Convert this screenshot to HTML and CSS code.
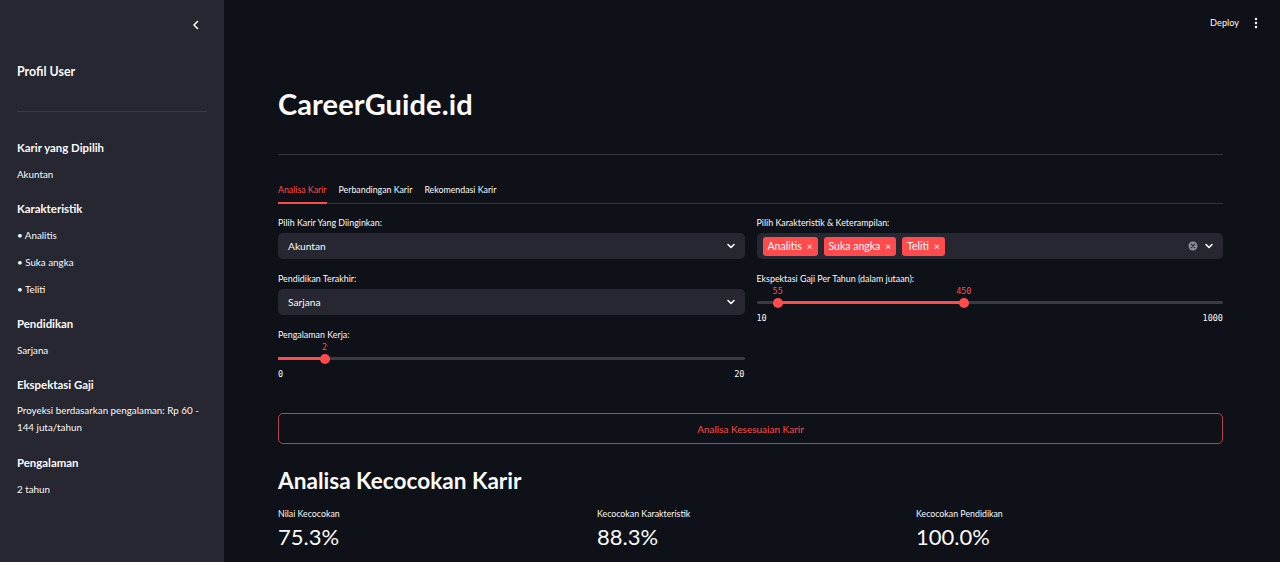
FILE: index.html
```html
<!DOCTYPE html>
<html lang="id">
<head>
<meta charset="utf-8">
<title>CareerGuide.id</title>
<link rel="stylesheet" href="styles.css">
</head>
<body>
<div class="app">
  <aside class="sidebar">
    <div class="collapse-row">
      <svg class="icon-collapse" width="10" height="10" viewBox="0 0 10 10"><path d="M6.5 1.5 L3 5 L6.5 8.5" fill="none" stroke="#fafafa" stroke-width="1.6" stroke-linecap="round" stroke-linejoin="round"/></svg>
    </div>
    <h2 class="side-title">Profil User</h2>
    <hr class="side-hr">
    <div class="side-section">
      <h3 class="side-head">Karir yang Dipilih</h3>
      <p class="side-text">Akuntan</p>
    </div>
    <div class="side-section">
      <h3 class="side-head">Karakteristik</h3>
      <p class="side-text bullet">• Analitis</p>
      <p class="side-text bullet">• Suka angka</p>
      <p class="side-text">• Teliti</p>
    </div>
    <div class="side-section">
      <h3 class="side-head">Pendidikan</h3>
      <p class="side-text">Sarjana</p>
    </div>
    <div class="side-section">
      <h3 class="side-head">Ekspektasi Gaji</h3>
      <p class="side-text wrap">Proyeksi berdasarkan pengalaman: Rp 60 - 144 juta/tahun</p>
    </div>
    <div class="side-section">
      <h3 class="side-head">Pengalaman</h3>
      <p class="side-text">2 tahun</p>
    </div>
  </aside>

  <main class="main">
    <header class="topbar">
      <span class="deploy">Deploy</span>
      <svg class="kebab" width="4" height="12" viewBox="0 0 4 12"><circle cx="2" cy="2" r="1.2" fill="#fafafa"/><circle cx="2" cy="6" r="1.2" fill="#fafafa"/><circle cx="2" cy="10" r="1.2" fill="#fafafa"/></svg>
    </header>

    <div class="content">
      <h1 class="title">CareerGuide.id</h1>
      <hr class="main-hr">

      <nav class="tabs">
        <span class="tab active">Analisa Karir</span>
        <span class="tab">Perbandingan Karir</span>
        <span class="tab">Rekomendasi Karir</span>
      </nav>

      <div class="form-grid">
        <div class="col">
          <label class="field-label">Pilih Karir Yang Diinginkan:</label>
          <div class="select">
            <span class="select-value">Akuntan</span>
            <svg class="chev" width="10" height="10" viewBox="0 0 10 10"><path d="M2 3.5 L5 6.5 L8 3.5" fill="none" stroke="#fafafa" stroke-width="1.6" stroke-linecap="round" stroke-linejoin="round"/></svg>
          </div>

          <label class="field-label gap">Pendidikan Terakhir:</label>
          <div class="select">
            <span class="select-value">Sarjana</span>
            <svg class="chev" width="10" height="10" viewBox="0 0 10 10"><path d="M2 3.5 L5 6.5 L8 3.5" fill="none" stroke="#fafafa" stroke-width="1.6" stroke-linecap="round" stroke-linejoin="round"/></svg>
          </div>

          <label class="field-label gap slider-label">Pengalaman Kerja:</label>
          <div class="slider">
            <div class="slider-values">
              <span class="slider-value" style="left:10%">2</span>
            </div>
            <div class="slider-track">
              <div class="slider-fill" style="left:0%;width:10%"></div>
              <span class="thumb" style="left:10%"></span>
            </div>
            <div class="slider-ticks"><span>0</span><span>20</span></div>
          </div>
        </div>

        <div class="col">
          <label class="field-label">Pilih Karakteristik &amp; Keterampilan:</label>
          <div class="select multi">
            <div class="tags">
              <span class="tag">Analitis <span class="tag-x">×</span></span>
              <span class="tag">Suka angka <span class="tag-x">×</span></span>
              <span class="tag">Teliti <span class="tag-x">×</span></span>
            </div>
            <div class="multi-icons">
              <svg width="10" height="10" viewBox="0 0 10 10"><circle cx="5" cy="5" r="4.5" fill="#8b8c93"/><path d="M3.4 3.4 L6.6 6.6 M6.6 3.4 L3.4 6.6" stroke="#262730" stroke-width="1.3" stroke-linecap="round"/></svg>
              <svg width="10" height="10" viewBox="0 0 10 10"><path d="M2 3.5 L5 6.5 L8 3.5" fill="none" stroke="#fafafa" stroke-width="1.6" stroke-linecap="round" stroke-linejoin="round"/></svg>
            </div>
          </div>

          <label class="field-label gap slider-label">Ekspektasi Gaji Per Tahun (dalam jutaan):</label>
          <div class="slider">
            <div class="slider-values">
              <span class="slider-value" style="left:4.55%">55</span>
              <span class="slider-value" style="left:44.44%">450</span>
            </div>
            <div class="slider-track">
              <div class="slider-fill" style="left:4.55%;width:39.89%"></div>
              <span class="thumb" style="left:4.55%"></span>
              <span class="thumb" style="left:44.44%"></span>
            </div>
            <div class="slider-ticks"><span>10</span><span>1000</span></div>
          </div>
        </div>
      </div>

      <button class="btn">Analisa Kesesuaian Karir</button>

      <h2 class="section-title">Analisa Kecocokan Karir</h2>

      <div class="metrics">
        <div class="metric">
          <div class="metric-label">Nilai Kecocokan</div>
          <div class="metric-value">75.3%</div>
        </div>
        <div class="metric">
          <div class="metric-label">Kecocokan Karakteristik</div>
          <div class="metric-value">88.3%</div>
        </div>
        <div class="metric">
          <div class="metric-label">Kecocokan Pendidikan</div>
          <div class="metric-value">100.0%</div>
        </div>
      </div>
    </div>
  </main>
</div>
</body>
</html>
```

FILE: styles.css
```css
* { box-sizing: border-box; }

html, body {
  margin: 0;
  padding: 0;
  height: 100%;
}

body {
  background: #0e1117;
  color: #fafafa;
  font-family: "Lato", "Noto Sans", sans-serif;
  overflow: hidden;
}

.app {
  display: flex;
  height: 562px;
}

/* Sidebar */
.sidebar {
  width: 224px;
  flex: 0 0 224px;
  background: #262730;
  padding: 0 17px;
}

.collapse-row {
  height: 50px;
  display: flex;
  justify-content: flex-end;
  align-items: center;
  padding-right: 6px;
}

.side-title {
  margin: 13px 0 0;
  font-size: 12.4px;
  line-height: 18px;
  font-weight: 700;
}

.side-hr {
  border: none;
  border-top: 1px solid #3a3b44;
  margin: 30px 0 28px;
}

.side-section { margin-bottom: 19px; }

.side-head {
  margin: 0 0 10px;
  font-size: 11.4px;
  line-height: 16px;
  font-weight: 700;
}

.side-text {
  margin: 0;
  font-size: 9.8px;
  line-height: 16px;
}

.side-text.bullet { margin-bottom: 11px; }

.side-text.wrap {
  line-height: 17px;
  margin-top: -1px;
}

/* Main */
.main {
  flex: 1;
  display: flex;
  flex-direction: column;
  min-width: 0;
}

.topbar {
  height: 46px;
  display: flex;
  justify-content: flex-end;
  align-items: center;
  gap: 15px;
  padding-right: 22px;
}

.deploy {
  font-size: 9.2px;
  line-height: 12px;
}

.content {
  padding: 0 57px 0 54px;
}

.title {
  margin: 40px 0 0;
  font-size: 29px;
  line-height: 36px;
  font-weight: 700;
  letter-spacing: 0.1px;
}

.main-hr {
  border: none;
  border-top: 1px solid #31333f;
  margin: 32px 0 0;
}

.tabs {
  display: flex;
  gap: 12px;
  margin-top: 28px;
  border-bottom: 1px solid #31333f;
}

.tab {
  font-size: 8.8px;
  line-height: 14px;
  padding-bottom: 5px;
  margin-bottom: -1px;
  border-bottom: 2px solid transparent;
}

.tab.active {
  color: #ff4b4b;
  border-bottom-color: #ff4b4b;
}

.form-grid {
  display: grid;
  grid-template-columns: 1fr 1fr;
  column-gap: 12px;
  margin-top: 12px;
}

.col { display: flex; flex-direction: column; }

.field-label {
  font-size: 8.9px;
  line-height: 14px;
  margin-bottom: 3px;
}

.field-label.gap { margin-top: 13px; }

.field-label.slider-label { margin-bottom: 0; }

.select {
  height: 26px;
  background: #262730;
  border-radius: 5px;
  display: flex;
  align-items: center;
  justify-content: space-between;
  padding: 0 9px 0 10px;
}

.select-value {
  font-size: 10.2px;
}

.select.multi { padding-left: 6px; }

.tags { display: flex; gap: 6px; }

.tag {
  background: #ff4b4b;
  color: #fff;
  border-radius: 3px;
  height: 19px;
  padding: 0 5px;
  display: flex;
  align-items: center;
  gap: 5px;
  font-size: 10.5px;
}

.tag-x { font-size: 10px; }

.multi-icons {
  display: flex;
  align-items: center;
  gap: 6px;
}

/* Sliders */
.slider { height: 38px; }

.slider-values {
  position: relative;
  height: 10px;
}

.slider-value {
  position: absolute;
  top: 0;
  transform: translateX(-50%);
  color: #ff4b4b;
  font-family: "DejaVu Sans Mono", monospace;
  font-size: 8.5px;
  line-height: 10px;
}

.slider-track {
  position: relative;
  height: 3px;
  margin-top: 5px;
  background: #3a3b44;
  border-radius: 2px;
}

.slider-fill {
  position: absolute;
  top: 0;
  height: 3px;
  background: #ff4b4b;
}

.thumb {
  position: absolute;
  top: 50%;
  width: 10px;
  height: 10px;
  border-radius: 50%;
  background: #ff4b4b;
  transform: translate(-50%, -50%);
}

.slider-ticks {
  display: flex;
  justify-content: space-between;
  margin-top: 9px;
  font-family: "DejaVu Sans Mono", monospace;
  font-size: 8.5px;
  line-height: 10px;
  color: #fafafa;
}

/* Button */
.btn {
  display: block;
  width: 100%;
  height: 31px;
  margin-top: 33px;
  background: transparent;
  border: 1px solid #b8444a;
  border-radius: 5px;
  color: #ff4b4b;
  font-family: inherit;
  font-size: 10px;
}

.section-title {
  margin: 22px 0 0;
  font-size: 22.6px;
  line-height: 30px;
  font-weight: 700;
}

.metrics {
  display: grid;
  grid-template-columns: repeat(3, 1fr);
  column-gap: 12px;
  margin-top: 12px;
}

.metric-label {
  font-size: 8.8px;
  line-height: 12px;
}

.metric-value {
  margin-top: 3px;
  font-size: 22px;
  line-height: 28px;
  font-weight: 400;
}
```
